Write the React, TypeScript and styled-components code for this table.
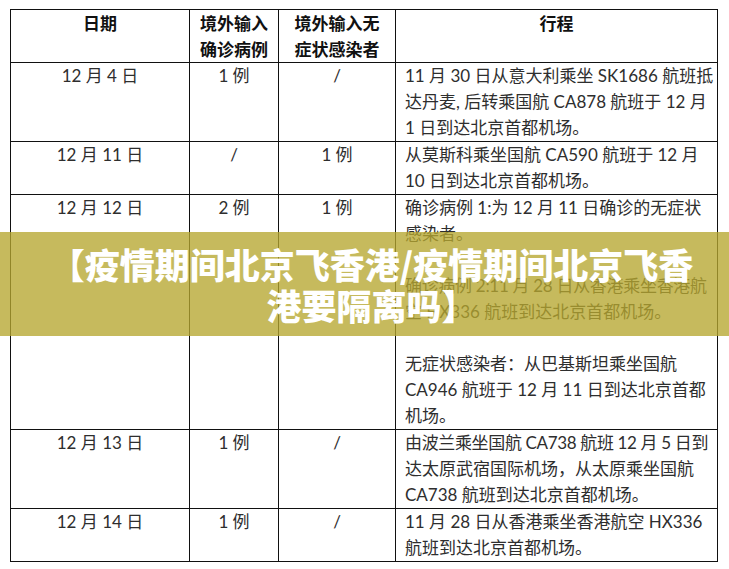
import React from "react";
import styled, { createGlobalStyle } from "styled-components";

const Global = createGlobalStyle`
  html, body { margin: 0; padding: 0; background: #ffffff; }
  body { width: 729px; height: 569px; overflow: hidden; }
`;

const Page = styled.div`
  position: relative;
  width: 729px;
  height: 569px;
  padding: 9px 0 0 10px;
  box-sizing: border-box;
  background: #fff;
`;

const Table = styled.table`
  border-collapse: collapse;
  table-layout: fixed;
  width: 707px;
  font-family: "Lato", "Noto Sans CJK SC", sans-serif;
  font-size: 17px;
  color: #2e2e2e;
`;

const Col = styled.col<{ $w: number }>`
  width: ${(p) => p.$w}px;
`;

const HeadCell = styled.th`
  border: 1px solid #111;
  padding: 0;
  vertical-align: top;
  text-align: center;
  font-weight: 700;
  color: #111;
  font-family: "Noto Sans CJK SC", sans-serif;
  font-size: 17px;
  line-height: 26px;
`;

const Cell = styled.td<{ $align?: "left" | "center" }>`
  border: 1px solid #111;
  padding: ${(p) => (p.$align === "left" ? "0 0 0 9px" : "0")};
  vertical-align: top;
  text-align: ${(p) => p.$align ?? "center"};
  line-height: 26px;
`;

const Line = styled.span<{ $squeeze?: number }>`
  display: block;
  white-space: nowrap;
  height: 26px;
  letter-spacing: ${(p) => (p.$squeeze ? `-${p.$squeeze}px` : "0")};
`;

const Banner = styled.div`
  position: absolute;
  left: 0;
  right: 0;
  top: 232px;
  height: 104px;
  background: rgba(182, 166, 48, 0.78);
  display: flex;
  flex-direction: column;
  align-items: center;
  justify-content: center;
  color: #ffffff;
  font-family: "Noto Sans CJK SC", sans-serif;
  font-weight: 900;
  font-size: 35px;
  line-height: 41px;
  padding: 0 0 1px 14px;
  box-sizing: border-box;
`;

const BannerLine = styled.span`
  display: block;
  white-space: nowrap;
`;

type Text = { t: string; s?: number };
type Row = { date: string; a: string; b: string; lines: Text[] };

const rows: Row[] = [
  {
    date: "12 月 4 日",
    a: "1 例",
    b: "/",
    lines: [
      { t: "11 月 30 日从意大利乘坐 SK1686 航班抵" },
      { t: "达丹麦, 后转乘国航 CA878 航班于 12 月" },
      { t: "1 日到达北京首都机场。" },
    ],
  },
  {
    date: "12 月 11 日",
    a: "/",
    b: "1 例",
    lines: [{ t: "从莫斯科乘坐国航 CA590 航班于 12 月" }, { t: "10 日到达北京首都机场。" }],
  },
  {
    date: "12 月 12 日",
    a: "2 例",
    b: "1 例",
    lines: [
      { t: "确诊病例 1:为 12 月 11 日确诊的无症状" },
      { t: "感染者。" },
      { t: "" },
      { t: "确诊病例 2:11 月 28 日从香港乘坐香港航", s: 0.3 },
      { t: "空 HX336 航班到达北京首都机场。" },
      { t: "" },
      { t: "无症状感染者：从巴基斯坦乘坐国航" },
      { t: "CA946 航班于 12 月 11 日到达北京首都" },
      { t: "机场。" },
    ],
  },
  {
    date: "12 月 13 日",
    a: "1 例",
    b: "/",
    lines: [
      { t: "由波兰乘坐国航 CA738 航班 12 月 5 日到", s: 0.35 },
      { t: "达太原武宿国际机场，从太原乘坐国航" },
      { t: "CA738 航班到达北京首都机场。" },
    ],
  },
  {
    date: "12 月 14 日",
    a: "1 例",
    b: "/",
    lines: [{ t: "11 月 28 日从香港乘坐香港航空 HX336" }, { t: "航班到达北京首都机场。" }],
  },
];

export default function App() {
  return (
    <>
      <Global />
      <Page>
        <Table>
          <colgroup>
            <Col $w={179} />
            <Col $w={89} />
            <Col $w={117} />
            <Col $w={322} />
          </colgroup>
          <thead>
            <tr>
              <HeadCell>
                <Line>日期</Line>
                <Line />
              </HeadCell>
              <HeadCell>
                <Line>境外输入</Line>
                <Line>确诊病例</Line>
              </HeadCell>
              <HeadCell>
                <Line>境外输入无</Line>
                <Line>症状感染者</Line>
              </HeadCell>
              <HeadCell>
                <Line>行程</Line>
                <Line />
              </HeadCell>
            </tr>
          </thead>
          <tbody>
            {rows.map((r) => (
              <tr key={r.date}>
                <Cell>
                  <Line>{r.date}</Line>
                </Cell>
                <Cell>
                  <Line>{r.a}</Line>
                </Cell>
                <Cell>
                  <Line>{r.b}</Line>
                </Cell>
                <Cell $align="left">
                  {r.lines.map((l, i) => (
                    <Line key={i} $squeeze={l.s}>
                      {l.t}
                    </Line>
                  ))}
                </Cell>
              </tr>
            ))}
          </tbody>
        </Table>
        <Banner>
          <BannerLine>【疫情期间北京飞香港/疫情期间北京飞香</BannerLine>
          <BannerLine>港要隔离吗】</BannerLine>
        </Banner>
      </Page>
    </>
  );
}
